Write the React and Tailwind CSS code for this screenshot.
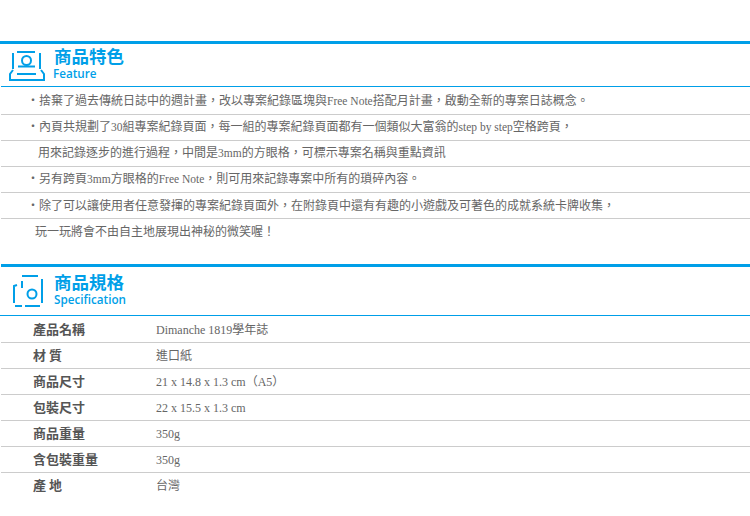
import React from "react";

const features = [
  { text: <>・捨棄了過去傳統日誌中的週計畫，改以專案紀錄區塊與<span className="text-[11.5px]">Free Note</span>搭配月計畫，啟動全新的專案日誌概念。</>, pad: "pl-[26px]" },
  { text: <>・內頁共規劃了<span className="text-[11.5px]">30</span>組專案紀錄頁面，每一組的專案紀錄頁面都有一個類似大富翁的<span className="text-[11.5px]">step by step</span>空格跨頁，</>, pad: "pl-[26px]" },
  { text: <>用來記錄逐步的進行過程，中間是<span className="text-[11.5px]">3mm</span>的方眼格，可標示專案名稱與重點資訊</>, pad: "pl-[37px]" },
  { text: <>・另有跨頁<span className="text-[11.5px]">3mm</span>方眼格的<span className="text-[11.5px]">Free Note</span>，則可用來記錄專案中所有的瑣碎內容。</>, pad: "pl-[26px]" },
  { text: "・除了可以讓使用者任意發揮的專案紀錄頁面外，在附錄頁中還有有趣的小遊戲及可著色的成就系統卡牌收集，", pad: "pl-[26px]" },
  { text: "玩一玩將會不由自主地展現出神秘的微笑喔！", pad: "pl-[34px]" },
];

const specs = [
  ["產品名稱", "Dimanche 1819學年誌"],
  ["材 質", "進口紙"],
  ["商品尺寸", "21 x 14.8 x 1.3 cm（A5）"],
  ["包裝尺寸", "22 x 15.5 x 1.3 cm"],
  ["商品重量", "350g"],
  ["含包裝重量", "350g"],
  ["產 地", "台灣"],
];

function FeatureIcon() {
  return (
    <svg width="38" height="32" viewBox="0 0 38 32" fill="none" stroke="#009fe8" strokeWidth="2">
      <path d="M9 3h18" />
      <path d="M5 4v16M32 4v16" />
      <circle cx="18.5" cy="11.5" r="4.5" />
      <path d="M10 17.5h17" />
      <path d="M5 21l-3 4v6h34v-6l-3-4" />
      <path d="M9 25h19" />
    </svg>
  );
}

function SpecIcon() {
  return (
    <svg width="32" height="34" viewBox="0 0 32 34" fill="none" stroke="#009fe8" strokeWidth="2">
      <path d="M10 2h16M30 5v24M28 32H13M10 32H3M2 29V12l3-1M10 7v7" />
      <circle cx="20" cy="20" r="4.5" />
    </svg>
  );
}

function SectionHeader({ icon, title, sub, height, iconPad, topInset, lineInset, subInset }) {
  return (
    <div>
      <div className={`h-[3px] bg-[#009fe8] ${topInset}`} />
      <div className={`flex items-center ${height}`}>
        <div className={`w-[53px] shrink-0 ${iconPad}`}>{icon}</div>
        <div className="flex flex-col pb-[3px] text-[#009fe8] font-['Noto_Sans_CJK_TC',sans-serif] font-bold">
          <span className="pl-[1px] text-[17.5px] leading-[20px]">{title}</span>
          <span className={`text-[11.7px] leading-[15px] font-['Open_Sans',sans-serif] font-semibold ${subInset}`}>{sub}</span>
        </div>
      </div>
      <div className={`h-[1px] bg-[#009fe8] ${lineInset}`} />
    </div>
  );
}

export default function App() {
  return (
    <div className="w-[750px] h-[516px] bg-white overflow-hidden pt-[41px] text-[#666] text-[12px] font-['Liberation_Serif','Noto_Sans_CJK_TC',serif]">
      <SectionHeader
        icon={<FeatureIcon />}
        title="商品特色"
        sub="Feature"
        height="h-[42px]"
        iconPad="pl-[8px]"
        topInset=""
        lineInset="ml-[1px]"
        subInset=""
      />
      <div className="pt-[2px] pl-[1px] mb-[19px]">
        {features.map((f, i) => (
          <div key={i} className={`h-[26px] flex items-center whitespace-nowrap border-b border-[#ccc] last:border-b-0 ${f.pad}`}>
            <span>{f.text}</span>
          </div>
        ))}
      </div>
      <SectionHeader
        icon={<SpecIcon />}
        title="商品規格"
        sub="Specification"
        height="h-[48px]"
        iconPad="pl-[12px]"
        topInset="ml-[1px]"
        lineInset=""
        subInset="pl-[1px]"
      />
      <div className="pt-[1px] pl-[1px]">
        {specs.map(([k, v]) => (
          <div key={k} className="h-[26px] flex items-center whitespace-nowrap border-b border-[#ccc] last:border-b-0">
            <span className="w-[155px] pl-[32px] mb-[2px] text-[13px] font-bold text-[#555] font-['Noto_Sans_CJK_TC',sans-serif]">{k}</span>
            <span>{v}</span>
          </div>
        ))}
      </div>
    </div>
  );
}
